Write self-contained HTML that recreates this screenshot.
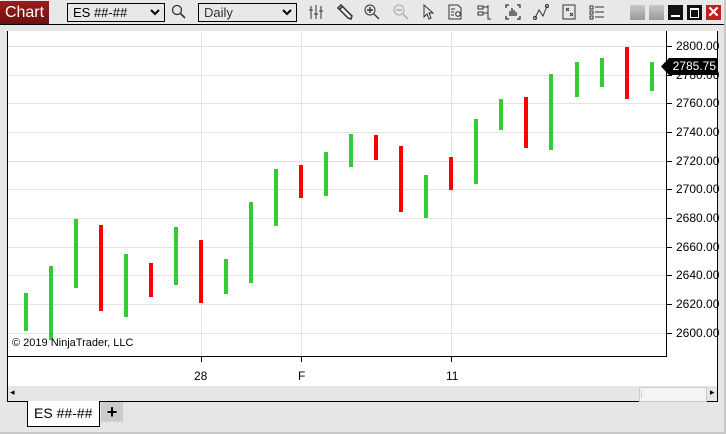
<!DOCTYPE html><html><head><style>
body{margin:0;width:726px;height:434px;background:#e6e6e6;font-family:"Liberation Sans",sans-serif;position:relative;overflow:hidden}
.a{position:absolute}
.b{position:absolute;width:4px}
.g{background:#33cc33}.r{background:#ff0000}
.lab{position:absolute;left:676px;font-size:12px;color:#000}
.tick{position:absolute;left:667px;width:5px;height:1px;background:#000}
.hg{position:absolute;left:8px;width:658px;height:1px;background:#e3e3e3}
</style></head><body>
<div class="a" style="left:0;top:0;width:726px;height:24px;background:#e8e8e8;border-bottom:1px solid #000"></div>
<div class="a" style="left:0;top:1px;width:49px;height:23px;background:linear-gradient(#9b1d1d,#6e1010);color:#fff;font-size:16px;line-height:23px;text-align:center">Chart</div>
<div class="a" style="left:67px;top:3px;height:19px;border:1px solid #000;background:#e8e8e8;font-size:13px;line-height:17px;padding-left:5px;box-sizing:border-box;width:98px">ES ##-##<svg class="a" style="right:4px;top:5px" width="10" height="8"><path d="M1 1l4 4 4-4" stroke="#000" stroke-width="2" fill="none"/></svg></div>
<svg class="a" style="left:171px;top:4px" width="16" height="16"><circle cx="6" cy="6" r="4.5" fill="none" stroke="#333" stroke-width="1.3"/><line x1="9.5" y1="9.5" x2="14" y2="14" stroke="#333" stroke-width="1.6"/></svg>
<div class="a" style="left:198px;top:3px;width:99px;height:19px;border:1px solid #000;box-sizing:border-box;font-size:13px;line-height:17px;padding-left:5px;color:#333">Daily<svg class="a" style="right:4px;top:5px" width="10" height="8"><path d="M1 1l4 4 4-4" stroke="#000" stroke-width="2" fill="none"/></svg></div>
<svg class="a" style="left:308px;top:4px" width="16" height="16" stroke="#333" fill="none"><path d="M3 2v13M8 1v14M13 2v13M1 6h4M6 10h4M11 7h4"/></svg>
<svg class="a" style="left:336px;top:4px" width="18" height="16" stroke="#333" fill="none" stroke-width="1.5"><path d="M2 4l3-3 11 11-1 3-3-1z M4 5l3-3"/></svg>
<svg class="a" style="left:364px;top:4px" width="16" height="16" stroke="#333" fill="none"><circle cx="6" cy="6" r="5"/><path d="M3 6h6M6 3v6M10 10l5 5" stroke-width="1.4"/></svg>
<svg class="a" style="left:393px;top:4px" width="16" height="16" stroke="#aaa" fill="none"><circle cx="6" cy="6" r="5"/><path d="M3 6h6M10 10l5 5" stroke-width="1.4"/></svg>
<svg class="a" style="left:422px;top:4px" width="14" height="16" stroke="#333" fill="none"><path d="M2 1v12l3-3 2 5 2-1-2-5h4z"/></svg>
<svg class="a" style="left:448px;top:4px" width="16" height="16" stroke="#333" fill="none"><path d="M1 1h9l3 3v11H1zM3 5h4M3 8h3M3 11h3"/><circle cx="10" cy="10" r="2.3"/></svg>
<svg class="a" style="left:477px;top:4px" width="16" height="16" stroke="#333" fill="none"><path d="M1 2h5v3H1zM1 8h5v3H1zM6 3h5M6 9h5M11 1v14h3"/></svg>
<svg class="a" style="left:505px;top:4px" width="16" height="16" stroke="#333" fill="none"><path d="M1 4V1h3M12 1h3v3M1 12v3h3M12 15h3v-3M5 12V7M7 12V4M9 12V6M11 12V8" stroke-width="1.3"/></svg>
<svg class="a" style="left:533px;top:4px" width="16" height="16" stroke="#333" fill="none"><path d="M2 14l4-8 4 6 4-10"/><circle cx="2" cy="14" r="1.5"/><circle cx="14" cy="2" r="1.5"/></svg>
<svg class="a" style="left:561px;top:4px" width="16" height="16" stroke="#333" fill="none"><path d="M2 1h12v14H2zM5 4l3 3M8 4l-3 3M9 9l3 3M12 9l-3 3"/></svg>
<svg class="a" style="left:589px;top:4px" width="16" height="16" stroke="#333" fill="none"><path d="M1 2h3v3H1zM1 7h3v3H1zM1 12h3v3H1zM6 3h9M6 8h9M6 13h9"/></svg>
<div class="a" style="left:630px;top:5px;width:15px;height:15px;background:linear-gradient(#c8c8c8,#999)"></div>
<div class="a" style="left:649px;top:5px;width:15px;height:15px;background:linear-gradient(#c8c8c8,#999)"></div>
<div class="a" style="left:668px;top:5px;width:15px;height:15px;background:#111"><div class="a" style="left:3px;top:10px;width:9px;height:2px;background:#fff"></div></div>
<div class="a" style="left:687px;top:5px;width:15px;height:15px;background:#111"><div class="a" style="left:3px;top:3px;width:7px;height:7px;border:1px solid #fff;border-top-width:2px"></div></div>
<div class="a" style="left:706px;top:5px;width:15px;height:15px;background:#c0201e;color:#fff;font-weight:bold;font-size:15px;line-height:15px;text-align:center">✕</div>

<div class="a" style="left:7px;top:31px;width:711px;height:371px;background:#fff;border-left:1px solid #000;border-right:1px solid #000;border-bottom:1px solid #000;box-sizing:border-box"></div>
<div class="a" style="left:666px;top:31px;width:1px;height:326px;background:#000"></div>
<div class="a" style="left:8px;top:356px;width:659px;height:1px;background:#000"></div>
<div class="hg" style="top:46px"></div><div class="hg" style="top:75px"></div><div class="hg" style="top:103px"></div><div class="hg" style="top:132px"></div><div class="hg" style="top:161px"></div><div class="hg" style="top:189px"></div><div class="hg" style="top:218px"></div><div class="hg" style="top:247px"></div><div class="hg" style="top:275px"></div><div class="hg" style="top:304px"></div><div class="hg" style="top:333px"></div>
<div class="a" style="left:201px;top:31px;width:1px;height:325px;background:#e3e3e3"></div>
<div class="a" style="left:301px;top:31px;width:1px;height:325px;background:#e3e3e3"></div>
<div class="a" style="left:451px;top:31px;width:1px;height:325px;background:#e3e3e3"></div>

<div class="tick" style="top:46px"></div><div class="lab" style="top:39px">2800.00</div>
<div class="tick" style="top:75px"></div><div class="lab" style="top:68px">2780.00</div>
<div class="tick" style="top:103px"></div><div class="lab" style="top:96px">2760.00</div>
<div class="tick" style="top:132px"></div><div class="lab" style="top:125px">2740.00</div>
<div class="tick" style="top:161px"></div><div class="lab" style="top:154px">2720.00</div>
<div class="tick" style="top:189px"></div><div class="lab" style="top:182px">2700.00</div>
<div class="tick" style="top:218px"></div><div class="lab" style="top:211px">2680.00</div>
<div class="tick" style="top:247px"></div><div class="lab" style="top:240px">2660.00</div>
<div class="tick" style="top:275px"></div><div class="lab" style="top:268px">2640.00</div>
<div class="tick" style="top:304px"></div><div class="lab" style="top:297px">2620.00</div>
<div class="tick" style="top:333px"></div><div class="lab" style="top:326px">2600.00</div>
<div class="a" style="left:661px;top:58px;width:57px;height:17px;background:#000;color:#fff;font-size:12px;line-height:17px;text-align:right;padding-right:2px;box-sizing:border-box;clip-path:polygon(0 50%,8px 0,100% 0,100% 100%,8px 100%)">2785.75</div>

<div class="b g" style="left:24px;top:293px;height:38px"></div>
<div class="b g" style="left:49px;top:266px;height:74px"></div>
<div class="b g" style="left:74px;top:219px;height:69px"></div>
<div class="b r" style="left:99px;top:225px;height:86px"></div>
<div class="b g" style="left:124px;top:254px;height:63px"></div>
<div class="b r" style="left:149px;top:263px;height:34px"></div>
<div class="b g" style="left:174px;top:227px;height:58px"></div>
<div class="b r" style="left:199px;top:240px;height:63px"></div>
<div class="b g" style="left:224px;top:259px;height:35px"></div>
<div class="b g" style="left:249px;top:202px;height:81px"></div>
<div class="b g" style="left:274px;top:169px;height:57px"></div>
<div class="b r" style="left:299px;top:165px;height:33px"></div>
<div class="b g" style="left:324px;top:152px;height:44px"></div>
<div class="b g" style="left:349px;top:134px;height:33px"></div>
<div class="b r" style="left:374px;top:135px;height:25px"></div>
<div class="b r" style="left:399px;top:146px;height:66px"></div>
<div class="b g" style="left:424px;top:175px;height:43px"></div>
<div class="b r" style="left:449px;top:157px;height:33px"></div>
<div class="b g" style="left:474px;top:119px;height:65px"></div>
<div class="b g" style="left:499px;top:99px;height:31px"></div>
<div class="b r" style="left:524px;top:97px;height:51px"></div>
<div class="b g" style="left:549px;top:74px;height:76px"></div>
<div class="b g" style="left:575px;top:62px;height:35px"></div>
<div class="b g" style="left:600px;top:58px;height:29px"></div>
<div class="b r" style="left:625px;top:47px;height:52px"></div>
<div class="b g" style="left:650px;top:62px;height:29px"></div>

<div class="a" style="left:12px;top:337px;font-size:11px;color:#000">© 2019 NinjaTrader, LLC</div>
<div class="a" style="left:201px;top:357px;width:1px;height:5px;background:#000"></div>
<div class="a" style="left:301px;top:357px;width:1px;height:5px;background:#000"></div>
<div class="a" style="left:451px;top:357px;width:1px;height:5px;background:#000"></div>
<div class="a" style="left:194px;top:369px;font-size:12px">28</div>
<div class="a" style="left:298px;top:369px;font-size:12px">F</div>
<div class="a" style="left:446px;top:369px;font-size:12px">11</div>
<div class="a" style="left:8px;top:386px;width:709px;height:15px;background:#e6e6e6"></div>
<div class="a" style="left:10px;top:387px;font-size:9px">◂</div>
<div class="a" style="left:710px;top:387px;font-size:9px">▸</div>
<div class="a" style="left:639px;top:387px;width:66px;height:13px;background:#f4f4f4;border:1px solid #ccc"></div>
<div class="a" style="left:641px;top:390px;width:1px;height:8px;background:#ccc"></div>
<div class="a" style="left:27px;top:401px;width:73px;height:26px;background:#fff;border:1px solid #000;border-top:none;box-sizing:border-box;font-size:14px;line-height:24px;padding-left:6px">ES ##-##</div>
<div class="a" style="left:101px;top:402px;width:22px;height:20px;background:#ccc;font-size:18px;line-height:20px;text-align:center;font-weight:bold">+</div>
<div class="a" style="left:724px;top:0;width:2px;height:434px;background:#c8c8c8"></div>
<div class="a" style="left:0;top:432px;width:726px;height:2px;background:#c8c8c8"></div>
</body></html>
